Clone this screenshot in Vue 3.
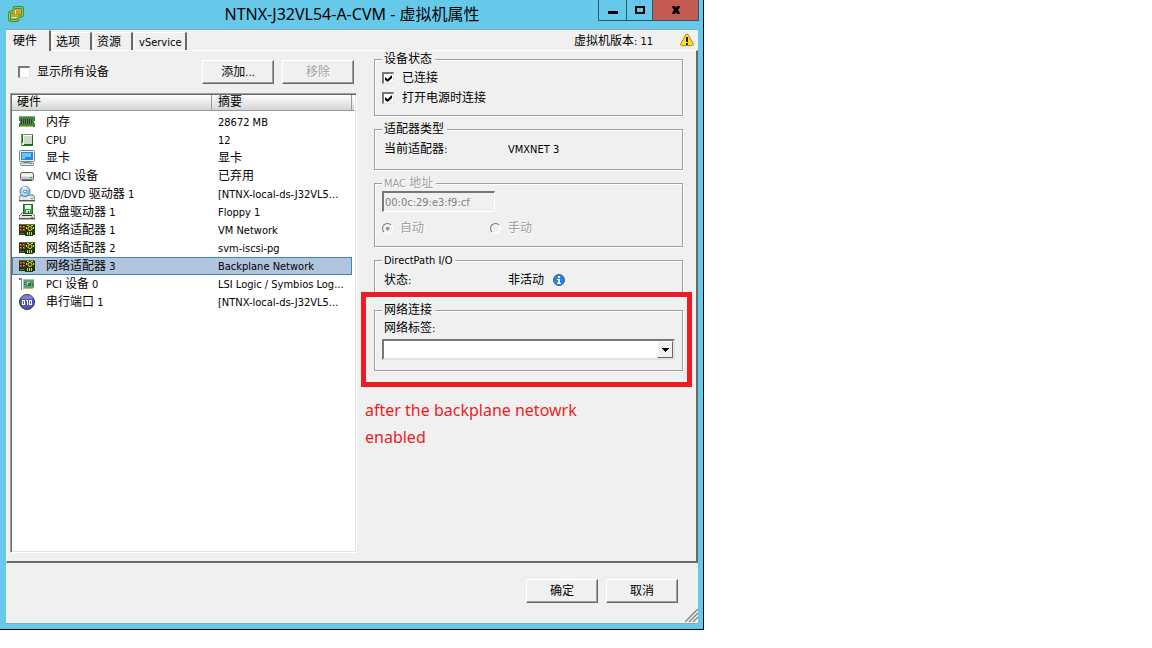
<script setup>
import { h, ref } from 'vue'

// Latin runs use a slightly smaller face than the Chinese text around them.
const Txt = ({ t }) =>
  h('span', { class: 'txt' }, t.split(/([\x20-\x7e]+)/).filter(Boolean).map(s =>
    /^[\x20-\x7e]/.test(s) ? h('span', { class: 'latin' }, s) : s))
Txt.props = ['t']

const tabs = ['硬件', '选项', '资源', 'vService']
const activeTab = ref(0)
const selected = ref(8)
const rows = [
  { icon: 'mem', name: '内存', info: '28672 MB' },
  { icon: 'cpu', name: 'CPU', info: '12' },
  { icon: 'video', name: '显卡', info: '显卡' },
  { icon: 'disk', name: 'VMCI 设备', info: '已弃用' },
  { icon: 'cd', name: 'CD/DVD 驱动器 1', info: '[NTNX-local-ds-J32VL5...' },
  { icon: 'floppy', name: '软盘驱动器 1', info: 'Floppy 1' },
  { icon: 'nic', name: '网络适配器 1', info: 'VM Network' },
  { icon: 'nic', name: '网络适配器 2', info: 'svm-iscsi-pg' },
  { icon: 'nic', name: '网络适配器 3', info: 'Backplane Network' },
  { icon: 'pci', name: 'PCI 设备 0', info: 'LSI Logic / Symbios Log...' },
  { icon: 'serial', name: '串行端口 1', info: '[NTNX-local-ds-J32VL5...' }
]
</script>

<template>
  <main class="window">
    <header class="titlebar">
      <svg class="logo" viewBox="0 0 16 16" width="16" height="16">
        <g fill="none" stroke-linejoin="round">
          <rect x="6" y="1.500" width="8.500" height="8.500" rx="1.500" stroke="#4c8a1c" stroke-width="3" />
          <rect x="1.500" y="6" width="8.500" height="8.500" rx="1.500" stroke="#4c8a1c" stroke-width="3" />
          <rect x="6" y="1.500" width="8.500" height="8.500" rx="1.500" stroke="#9ccb3c" stroke-width="1.200" />
          <rect x="1.500" y="6" width="8.500" height="8.500" rx="1.500" stroke="#9ccb3c" stroke-width="1.200" />
        </g>
        <path d="M7 4h5v4H9v4H4V8h3z" fill="#cfe6c0" />
        <path d="M8 4h4v4H9v3H4V8h4z" fill="#f0920c" />
      </svg>
      <h1>NTNX-J32VL54-A-CVM - 虚拟机属性</h1>
      <div class="controls">
        <button class="min" aria-label="最小化"><svg width="12" height="12" viewBox="0 0 12 12"><path d="M1 7h10v3H1z" /></svg></button>
        <button class="max" aria-label="最大化"><svg width="12" height="12" viewBox="0 0 12 12"><path d="M1 2h10v8H1zM3 4v4h6V4z" fill-rule="evenodd" /></svg></button>
        <button class="close" aria-label="关闭"><svg width="12" height="12" viewBox="0 0 12 12"><path d="M2 2h3l1 2 1-2h3v1L8 6l2 3v1H7L6 8l-1 2H2V9l2-3-2-3z" /></svg></button>
      </div>
    </header>

    <div class="body">
      <div class="tabbar">
        <nav class="tabs" role="tablist">
          <button v-for="(t, i) in tabs" :key="t" role="tab" :class="['tab', { active: activeTab === i }]" :aria-selected="activeTab === i" @click="activeTab = i"><Txt :t="t" /></button>
        </nav>
        <div class="version">
          <Txt t="虚拟机版本: 11" class="version-text" />
          <svg width="14" height="14" viewBox="0 0 14 14">
            <path d="M7 1c.6 0 1 .4 1.300 1l5 9c.4.900 0 1.600-.9 1.600H1.600c-.9 0-1.300-.7-.9-1.600l5-9C6 1.400 6.400 1 7 1z" fill="#ffdf1e" stroke="#a88a1c" />
            <path d="M6 4h2v5H6zM6 10h2v2H6z" fill="#222" />
          </svg>
        </div>
      </div>

      <section class="panel">
        <div class="left">
          <div class="toolbar">
            <label class="show-all"><input type="checkbox" /><Txt t="显示所有设备" /></label>
            <button class="btn"><Txt t="添加..." /></button>
            <button class="btn" disabled><Txt t="移除" /></button>
          </div>
          <div class="list">
            <table>
              <colgroup><col class="c-name" /><col /><col class="c-end" /></colgroup>
              <thead><tr><th>硬件</th><th>摘要</th><th></th></tr></thead>
              <tbody>
                <tr v-for="(r, i) in rows" :key="i" :class="{ selected: selected === i }" @click="selected = i">
                  <td>
                    <div class="item">
                      <svg width="16" height="16" viewBox="0 0 16 16">
                        <g v-if="r.icon === 'mem'">
                          <path d="M0 2h16v5h-1v2h1v4H0V9h1V7H0z" fill="#3b8a35" /><path d="M0 2h16v1H0z" fill="#6dba62" />
                          <path d="M2 5h3v5H2zM6 5h3v5H6zM10 5h3v5h-3z" fill="#303830" /><path d="M3 5h1v5H3zM7 5h1v5H7zM11 5h1v5h-1z" fill="#747e78" />
                          <path d="M1 12h6v1H1zM8 12h6v1H8z" fill="#d3c34a" />
                        </g>
                        <g v-else-if="r.icon === 'cpu'">
                          <rect x="2" y="2" width="12" height="12" fill="#1d6b24" /><path d="M2 2h12v1H3v11H2z" fill="#58a250" />
                          <rect x="4" y="3" width="9" height="9" fill="#d4d7d0" /><path d="M4 3h9v1H5v8H4z" fill="#fff" /><path d="M3 11h2v2H3z" fill="#fff" />
                        </g>
                        <g v-else-if="r.icon === 'video'">
                          <rect x=".5" y=".5" width="15" height="11" rx="1" fill="#edf1f4" stroke="#6d8294" /><rect x="2" y="2" width="12" height="8" fill="#2489dd" />
                          <path d="M3 3h9v4H6v2H3z" fill="#68c9fa" /><path d="M5 12h6v1H5z" fill="#9aa3a8" /><rect x="1.500" y="13" width="13" height="2.500" rx="1" fill="#edf0ed" stroke="#53636b" stroke-width=".8" /><path d="M11 13h2v1h-2z" fill="#45ac2f" />
                        </g>
                        <g v-else-if="r.icon === 'disk'">
                          <rect x="1.500" y="4.500" width="13" height="8" rx="2" fill="#ececec" stroke="#555" /><path d="M2 8h12v3q0 1-1 1H3q-1 0-1-1z" fill="#c4c7c4" /><path d="M2 8h12" stroke="#fff" /><path d="M3 12h10" stroke="#333" /><path d="M11 9h2v1h-2z" fill="#25b719" />
                        </g>
                        <g v-else-if="r.icon === 'cd'">
                          <path d="M2 9h12l2 3v3H0v-3z" fill="#e5e7e5" stroke="#444" stroke-width=".8" /><path d="M0 14h16v1H0z" fill="#555" />
                          <circle cx="6" cy="5.500" r="5" fill="#bbd9f3" stroke="#42749f" /><path d="M6 5L3 1.500q3-2 5 0z" fill="#fff" /><path d="M6 6l4-2q1 3-1 5z" fill="#73b9ee" /><circle cx="6" cy="5.500" r="1.500" fill="#fff" stroke="#5884a9" /><path d="M12 12h2v1h-2z" fill="#25b719" />
                        </g>
                        <g v-else-if="r.icon === 'floppy'">
                          <path d="M3 9h10l3 3v3H0v-3z" fill="#e5e7e5" stroke="#444" stroke-width=".8" /><path d="M0 14h16v1H0z" fill="#555" /><path d="M3 11h10v1H3z" fill="#333" />
                          <rect x="4.500" y=".5" width="9" height="9" fill="#36a642" stroke="#176c20" /><rect x="6" y="1" width="6" height="4" fill="#f3f6ef" /><rect x="7" y="6" width="4" height="3" fill="#ddd" /><path d="M9 7h1v2H9z" fill="#194d1e" /><path d="M12 13h2v1h-2z" fill="#25b719" />
                        </g>
                        <g v-else-if="r.icon === 'nic'">
                          <path d="M0 2h16v11h-2v1H6v-1H0z" fill="#173b17" /><path d="M0 2h16v1H0z" fill="#517b35" />
                          <path d="M1 4h2v2H1zM4 4h2v2H4zM1 7h2v2H1zM4 7h2v2H4z" fill="#ee2d11" /><path d="M1 4h1v1H1zM4 4h1v1H4zM1 7h1v1H1zM4 7h1v1H4z" fill="#ff9d18" />
                          <path d="M8 3h2v1H8zM12 3h2v1h-2zM7 5h1v2H7zM14 5h1v2h-1zM8 10h1v3H8zM10 10h1v3h-1zM12 10h1v3h-1z" fill="#eccb31" /><circle cx="11" cy="6.500" r="2" fill="#263b14" stroke="#f2d833" /><path d="M1 11h4v1H1z" fill="#64716a" />
                        </g>
                        <g v-else-if="r.icon === 'pci'">
                          <path d="M0 2h3v12H2V4H0z" fill="#728887" /><rect x="4" y="3" width="11" height="9" fill="#60a078" /><path d="M4 3h11v1H5v8H4z" fill="#9bcaac" /><path d="M4 12h10v1H4z" fill="#b9b86b" />
                          <rect x="8" y="6" width="4" height="4" fill="#2b7051" /><path d="M8 6h3v1H9v2H8z" fill="#a5d0b4" /><path d="M5 6h2v1H5zM5 8h2v1H5zM13 7h1v3h-1z" fill="#2b7051" />
                        </g>
                        <g v-else>
                          <circle cx="8" cy="8" r="7.500" fill="#5357b5" stroke="#292e60" /><path d="M2 5q1-4 6-4t6 4z" fill="#7d83d3" />
                          <path d="M3 6h3v5H3zM4 7v3h1V7zM7 6h2v5H8V7H7zM10 6h3v5h-3zM11 7v3h1V7z" fill="#fff" fill-rule="evenodd" />
                        </g>
                      </svg>
                      <Txt :t="r.name" />
                    </div>
                  </td>
                  <td><Txt :t="r.info" /></td>
                  <td></td>
                </tr>
              </tbody>
            </table>
          </div>
        </div>

        <div class="right">
          <fieldset class="status">
            <legend>设备状态</legend>
            <label><input type="checkbox" checked /><Txt t="已连接" /></label>
            <label><input type="checkbox" checked /><Txt t="打开电源时连接" /></label>
          </fieldset>
          <fieldset class="adapter">
            <legend>适配器类型</legend>
            <div class="pair"><Txt t="当前适配器:" /><Txt t="VMXNET 3" /></div>
          </fieldset>
          <fieldset class="mac" disabled>
            <legend><Txt t="MAC 地址" /></legend>
            <input type="text" value="00:0c:29:e3:f9:cf" aria-label="MAC 地址" />
            <div class="radios">
              <label><input type="radio" name="mac" checked />自动</label>
              <label><input type="radio" name="mac" />手动</label>
            </div>
          </fieldset>
          <fieldset class="direct">
            <legend><Txt t="DirectPath I/O" /></legend>
            <div class="pair">
              <Txt t="状态:" />
              <span class="state"><Txt t="非活动" />
                <svg width="12" height="12" viewBox="0 0 12 12"><circle cx="6" cy="6" r="5.500" fill="#2f83d6" stroke="#2368b4" /><path d="M5 2h2v2H5zM4 5h3v4h1v1H4V9h1V6H4z" fill="#fff" /></svg>
              </span>
            </div>
          </fieldset>
          <div class="marked">
            <fieldset class="network">
              <legend>网络连接</legend>
              <label for="net"><Txt t="网络标签:" /></label>
              <div class="combo">
                <select id="net"><option></option></select>
                <span class="arrow"><svg width="7" height="4" viewBox="0 0 7 4"><path d="M0 0h7v1H6v1H5v1H4v1H3V3H2V2H1V1H0z" /></svg></span>
              </div>
            </fieldset>
          </div>
          <p class="note">after the backplane netowrk<br />enabled</p>
        </div>
      </section>

      <footer>
        <button class="btn">确定</button>
        <button class="btn">取消</button>
        <svg class="grip" width="13" height="13" viewBox="0 0 13 13"><path d="M0 13L13 0M4 13l9-9M8 13l5-5" stroke="#888" stroke-width="1.500" /><path d="M2 13L13 2M6 13l7-7M10 13l3-3" stroke="#fff" /></svg>
      </footer>
    </div>
  </main>
</template>

<style>
body { background: #fff; }
.txt { white-space: pre; }
.txt .latin { font-family: "DejaVu Sans Condensed", "DejaVu Sans", sans-serif; font-stretch: condensed; font-size: 11px; line-height: 12px; }
</style>

<style scoped>
* { box-sizing: border-box; }
.window {
  width: calc(100% * 11 / 18);
  min-width: 640px;
  padding: 0 5px 5px 6px;
  background: #66c9ea;
  border: solid #000;
  border-width: 0 1px 1px 0;
  font: 12px/18px "Liberation Sans", "Noto Sans CJK SC", sans-serif;
  color: #000;
}
button, input, select { font: inherit; color: inherit; margin: 0; }
svg { display: block; flex: none; }
.titlebar { position: relative; height: 29px; display: flex; align-items: center; justify-content: center; }
.titlebar h1 { margin: 0; padding-bottom: 2px; font: 16px/20px "Noto Sans", "Noto Sans CJK SC", sans-serif; white-space: nowrap; }
.logo { position: absolute; left: 2px; top: 6px; }
.controls { position: absolute; right: -1px; top: 0; display: flex; height: 21px; border: 1px solid #2d5869; border-top: 0; }
.controls button { width: 27px; padding: 0; border: 0; background: transparent; display: flex; align-items: center; justify-content: center; }
.controls .max { width: 27px; border: solid #2d5869; border-width: 0 1px; }
.controls .close { width: 45px; background: #c35b52; }
.body { background: #f0f0f0; border: solid #88a8b3; border-width: 1px 0; }
.tabbar { display: flex; justify-content: space-between; align-items: flex-end; height: 20px; }
.tabs { display: flex; align-items: flex-end; }
.tab { height: 18px; padding: 0 10px 0 3px; background: #f0f0f0; border: solid; border-width: 1px 2px 0 1px; border-color: #fff #696969 #fff #fff; line-height: 18px; white-space: nowrap; }
.tab + .tab { margin-left: 1px; }
.tab:last-child { padding: 0 4px; }
.tab.active { height: 21px; margin-bottom: -1px; padding: 0 12px 0 6px; line-height: 20px; position: relative; }
.version { display: flex; align-items: center; gap: 27px; padding-right: 4px; }
.version-text { padding-top: 3px; }
.panel {
  display: grid;
  grid-template-columns: 347fr 309fr;
  column-gap: 17px;
  padding: 0 13px 8px 3px;
  border: solid;
  border-width: 1px 2px 2px 1px;
  border-color: #fff #696969 #696969 #fff;
}
.left { display: flex; flex-direction: column; }
.toolbar { display: flex; gap: 8px; padding: 9px 3px 9px 8px; align-items: center; }
label { display: flex; align-items: center; }
.show-all { margin-right: auto; gap: 7px; }
.btn { width: 72px; height: 24px; padding: 0; background: #f0f0f0; border: 1px solid; border-color: #fff #696969 #696969 #fff; box-shadow: inset -1px -1px 0 #a0a0a0; line-height: 22px; }
.btn:disabled { color: #a0a0a0; text-shadow: 1px 1px 0 #fff; }
input[type="checkbox"] { appearance: none; width: 12px; height: 12px; background: #fff; border: solid; border-width: 2px 1px 1px 2px; border-color: #777 #e3e3e3 #e3e3e3 #777; }
input[type="checkbox"]:checked::before { content: ""; display: block; width: 7px; height: 7px; margin: 1px; background: #000; clip-path: polygon(0 28%, 38% 60%, 100% 0, 100% 42%, 38% 100%, 0 70%); }
.list { min-height: 460px; flex: 1; background: #fff; border: 1px solid; border-color: #a0a0a0 #fff #fff #a0a0a0; box-shadow: inset 1px 1px 0 #696969, inset -1px -1px 0 #e3e3e3; padding: 1px; }
table { width: 100%; table-layout: fixed; border-collapse: separate; border-spacing: 0; }
.c-name { width: 200px; }
.c-end { width: 3px; }
th { height: 16px; padding: 0 5px; text-align: left; font-weight: 400; line-height: 15px; background: linear-gradient(#fff, #d5d5d5); border-right: 1px solid #999; border-bottom: 1px solid #999; }
th:last-child { padding: 0; border-right-color: #fff; }
th:nth-child(2) { padding-left: 6px; }
tbody::before { content: ""; display: block; height: 2px; }
td { height: 18px; padding: 0 0 0 6px; border: solid transparent; border-width: 1px 0; line-height: 16px; white-space: nowrap; overflow: hidden; }
td:last-child { padding: 0; }
td:first-child { border-left-width: 1px; }
.item { display: flex; align-items: center; gap: 11px; height: 16px; }
.selected td { background: #b0c4de; border-color: #4682b4; }
.selected td:nth-child(2) { border-right: 1px solid #4682b4; }
.selected td:last-child { background: none; border-color: transparent; }
.right { min-width: 0; }
fieldset { margin: 0 0 5px; min-width: 0; padding: 0 7px 7px; border: 1px solid #a0a0a0; box-shadow: 1px 1px 0 #fff, inset 1px 1px 0 #fff; }
legend { padding: 0 3px 0 2px; line-height: 16px; background: #f0f0f0; }
.status { height: 65px; padding-top: 1px; }
.status label { height: 20px; gap: 8px; }
.adapter { height: 49px; }
.mac { height: 72px; color: #a0a0a0; text-shadow: 1px 1px 0 #fff; }
.mac > input { display: block; width: 113px; height: 21px; padding: 0 1px; background: #f0f0f0; border: solid; border-width: 2px 1px 1px 2px; border-color: #777 #fff #fff #777; font: 11px/16px "DejaVu Sans Condensed", "DejaVu Sans", sans-serif; font-stretch: condensed; color: #808080; }
.radios { display: grid; grid-template-columns: 108px 1fr; padding-top: 7px; }
.radios label { gap: 7px; }
input[type="radio"] { appearance: none; width: 11px; height: 11px; border: 1px solid; border-radius: 50%; border-color: #777 #fff #fff #777; }
input[type="radio"]:checked { background: radial-gradient(circle, #999 0 2px, transparent 2px); }
.pair { display: grid; grid-template-columns: 124px 1fr; padding: 3px 0 0 2px; }
.state { display: flex; align-items: center; gap: 9px; }
.direct { height: 45px; margin: 0; }
.marked { position: relative; padding-top: 5px; }
.marked::after { content: ""; position: absolute; inset: -5px -9px -16px -13px; border: 5px solid #ed1c24; pointer-events: none; }
.network { height: 69px; margin: 0; }
.network label { padding: 1px 0 0 2px; }
.combo { position: relative; margin-top: 2px; }
.combo select { appearance: none; display: block; width: 100%; height: 21px; background: #fff; border: 2px solid; border-color: #777 #e3e3e3 #e3e3e3 #777; border-radius: 0; }
.arrow { position: absolute; right: 2px; top: 2px; width: 16px; height: 17px; display: flex; align-items: center; justify-content: center; background: #f0f0f0; border: 1px solid; border-color: #fff #696969 #696969 #fff; pointer-events: none; }
.note { margin: 26px -6px 0 -9px; font: 16px/27px "Noto Sans", sans-serif; color: #ed1c24; }
footer { position: relative; display: flex; justify-content: flex-end; gap: 8px; padding: 16px 20px 20px; }
.grip { position: absolute; right: 0; bottom: 1px; }
</style>
